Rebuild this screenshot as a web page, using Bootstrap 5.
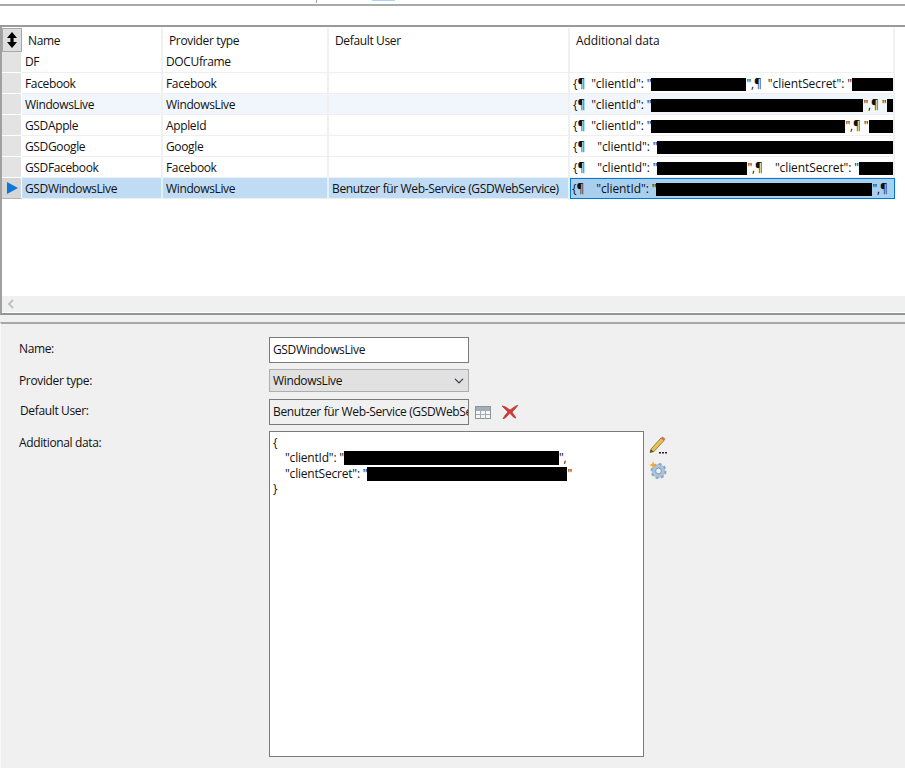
<!DOCTYPE html>
<html lang="en"><head><meta charset="utf-8"><title>Providers</title>
<link href="https://cdn.jsdelivr.net/npm/bootstrap@5.3.0/dist/css/bootstrap.min.css" rel="stylesheet">
<style>
html,body{height:768px;overflow:hidden}
body{background:#fff;color:#111;font:12px/15.3px "Open Sans","Noto Sans",sans-serif;letter-spacing:-.36px}
.tabstrip{height:4px;position:relative}
.tabline{width:1px;height:3px;background:#a0a0a0;margin-left:316px}
.tabmark{width:23px;height:1px;background:#a8d4f5;position:absolute;left:372px;top:0}
.toolstrip{border-top:2px solid #a9a9a9;border-bottom:2px solid #9a9a9a;box-sizing:content-box;height:19px}
.gridpane{height:288px;border-left:2px solid #a0a0a0;border-bottom:2px solid #8f959b;padding-top:1px}
.gridscroll{height:268px;overflow:hidden}
.grid-tbl{table-layout:fixed;width:893px;margin:0;border-collapse:separate;border-spacing:0;color:#111}
.grid-tbl>thead>tr>th,.grid-tbl>tbody>tr>td{font-weight:400;height:21px;padding:1px 0 0 3px;white-space:nowrap;overflow:hidden;border:0;border-bottom:1px solid #efefef;border-right:2px solid #f0f0f0;background:#fff;color:#111;vertical-align:middle;box-shadow:none}
.grid-tbl>tbody>tr:first-child>td{padding-top:0}
.grid-tbl>thead>tr>th{height:24px;border-bottom:0;padding:2px 0 0 6px}
.grid-tbl>thead>tr>th.selcol,.grid-tbl>tbody>tr>td.selcol{padding:0;background:#e3e3e3;border-right:1px solid #fff;border-bottom:1px solid #fff}
.grid-tbl>thead>tr>th.selcol{background:#dedede;border:1px solid #a8a8a8;text-align:center}
.grid-tbl>tbody>tr.altrow>td:not(.selcol){background:#f0f6fc}
.grid-tbl>tbody>tr.selrow>td:not(.selcol){background:#bfdcf4;border-right-color:#e4f0fa}
.grid-tbl>tbody>tr.selrow>td.selcol{background:#d6d6d6;border-bottom:1px solid #b5b5b5}
.grid-tbl>tbody>tr.selrow>td.curcell{background:#a8cfee;border:1px solid #0078d7;padding:0 0 0 1px}
.grid-tbl .datacol{letter-spacing:-.1px}
.blot{display:inline-block;background:#000;height:13px;vertical-align:-3px}
.hscroll{background:#f0f0f0;display:flex;align-items:center;padding-left:5px;border-bottom:1px solid #fff;box-sizing:content-box;height:16px}
.gutter{height:7px;background:#f0f0f0}
.detail{height:446px;background:#f0f0f0;border-top:2px solid #a8a8a8;border-left:1px solid #fafafa;padding:13px 0 0 18px}
.fieldrow{display:flex;align-items:flex-start}
.fieldlabel{width:250px;flex:none;margin:0;color:#111;padding-top:4px}
.shiftlabel{text-indent:1px}
.fieldbox.form-control,.fieldbox.form-select{width:200px;flex:none;border:1px solid #7a7a7a;border-radius:0;font:inherit;letter-spacing:inherit;color:#111;padding:0 3px;box-shadow:none}
.fieldbox.form-control{height:26px;line-height:23px;background:#fff;white-space:nowrap;overflow:hidden}
.fieldbox.form-select{height:23px;background-color:#e1e1e1;border-color:#adadad;background-position:right 3px center;background-size:12px 10px;padding-right:20px}
.fieldbox.roval.form-control{background:#f0f0f0}
.jsonbox.form-control{width:375px;height:326px;flex:none;border:1px solid #7a7a7a;border-radius:0;background:#fff;font:inherit;letter-spacing:-.2px;line-height:15.3px;color:#111;padding:3px 3px;box-shadow:none}
.jsonline{white-space:nowrap;height:15.3px}
.jsonindent{padding-left:12px}
.jsonbox .blot{height:14px;vertical-align:-3px}
.iconstack{display:flex;flex-direction:column;gap:6px;margin:4px 0 0 5px}
.inlineicons{display:flex;align-items:center;gap:10px;margin:3px 0 0 6px;height:20px}
svg{display:block}
</style></head><body>
<div class="tabstrip"><div class="tabline"></div><div class="tabmark"></div></div>
<div class="toolstrip"></div>
<div class="gridpane">
<div class="gridscroll">
<table class="table grid-tbl">
<colgroup><col style="width:20px"><col style="width:141px"><col style="width:166px"><col style="width:241px"><col style="width:325px"></colgroup>
<thead><tr>
<th class="selcol"><svg class="mx-auto" width="12" height="18" viewBox="0 0 12 18"><path d="M6 1 11 7H7.600v4H11L6 17 1 11h3.400V7H1z" fill="#000"/></svg></th>
<th>Name</th><th>Provider type</th><th>Default User</th><th class="datacol">Additional data</th></tr></thead>
<tbody>
<tr><td class="selcol"></td><td>DF</td><td>DOCUframe</td><td></td><td></td></tr>
<tr><td class="selcol"></td><td>Facebook</td><td>Facebook</td><td></td><td class="datacol">{¶ &nbsp;"clientId": "<span class="blot" style="width:95px"></span>",¶ &nbsp;"clientSecret": "<span class="blot" style="width:45px"></span></td></tr>
<tr class="altrow"><td class="selcol"></td><td>WindowsLive</td><td>WindowsLive</td><td></td><td class="datacol">{¶ &nbsp;"clientId": "<span class="blot" style="width:212px"></span>",¶ "<span class="blot" style="width:10px"></span></td></tr>
<tr><td class="selcol"></td><td>GSDApple</td><td>AppleId</td><td></td><td class="datacol">{¶ &nbsp;"clientId": "<span class="blot" style="width:194px"></span>",¶ "<span class="blot" style="width:28px"></span></td></tr>
<tr><td class="selcol"></td><td>GSDGoogle</td><td>Google</td><td></td><td class="datacol">{¶ &nbsp; &nbsp;"clientId": "<span class="blot" style="width:238px"></span></td></tr>
<tr><td class="selcol"></td><td>GSDFacebook</td><td>Facebook</td><td></td><td class="datacol">{¶ &nbsp; &nbsp;"clientId": "<span class="blot" style="width:90px"></span>",¶ &nbsp; &nbsp;"clientSecret": "<span class="blot" style="width:40px"></span></td></tr>
<tr class="selrow"><td class="selcol"><svg class="ms-1" width="12" height="12" viewBox="0 0 12 12"><path d="M1 0 12 6 1 12z" fill="#0a78d8"/></svg></td><td>GSDWindowsLive</td><td>WindowsLive</td><td>Benutzer für Web-Service (GSDWebService)</td><td class="curcell datacol">{¶ &nbsp; &nbsp;"clientId": "<span class="blot" style="width:216px"></span>",¶</td></tr>
</tbody></table>
</div>
<div class="hscroll"><svg width="8" height="10" viewBox="0 0 8 10"><path d="M6 1 2 5l4 4" fill="none" stroke="#c2c2c2" stroke-width="2"/></svg></div>
</div>
<div class="gutter"></div>
<div class="detail">
<div class="fieldrow" style="margin-bottom:6px"><label class="fieldlabel form-label">Name:</label><div class="fieldbox form-control">GSDWindowsLive</div></div>
<div class="fieldrow" style="margin-bottom:7px"><label class="fieldlabel form-label">Provider type:</label><select class="fieldbox form-select"><option>WindowsLive</option></select></div>
<div class="fieldrow" style="margin-bottom:6px"><label class="fieldlabel form-label shiftlabel">Default User:</label><div class="fieldbox roval form-control">Benutzer für Web-Service (GSDWebService)</div>
<div class="inlineicons">
<svg width="16" height="13" viewBox="0 0 16 13"><rect x=".5" y=".5" width="15" height="12" fill="#f4f6f8" stroke="#8c949c"/><path d="M1 1h14v3H1z" fill="#a4adb6"/><path d="M1 4.500h14M1 8.500h14M5.500 4v8.500M10.500 4v8.500" stroke="#a3acb5"/></svg>
<svg width="18" height="14" viewBox="0 0 18 14"><path d="M1 1c3 0 5 2 8 4 3-2 5-4 8-5-2 3-4 5-6 7 1 2 3 4 4 6-2 0-4-2-6-5-2 2-4 5-7 6 1-3 3-5 5-7C5 5 3 3 1 1z" fill="#d63a32" stroke="#a92a25" stroke-width=".6"/></svg>
</div></div>
<div class="fieldrow"><label class="fieldlabel form-label">Additional data:</label>
<div class="jsonbox form-control">
<div class="jsonline">{</div>
<div class="jsonline jsonindent">"clientId": "<span class="blot" style="width:215px"></span>",</div>
<div class="jsonline jsonindent">"clientSecret": "<span class="blot" style="width:200px"></span>"</div>
<div class="jsonline">}</div>
</div>
<div class="iconstack">
<svg width="18" height="19" viewBox="0 0 18 19"><path d="M2 14 12 3l3 2.500L5 16.500l-4 1z" fill="#e8bf55" stroke="#8a6b28" stroke-width=".8"/><path d="M12 3l1.500-1.500 3 2.500L15 5.500z" fill="#c9736a"/><path d="M1 17.500l1-3 2.500 2z" fill="#444"/><path d="M10 17h2v1.500h-2zM13 17h2v1.500h-2zM16 17h2v1.500h-2z" fill="#222"/></svg>
<svg width="18" height="19" viewBox="0 0 18 19"><circle cx="9.500" cy="11" r="5" fill="none" stroke="#a9c4dc" stroke-width="3.800"/><circle cx="9.500" cy="11" r="7" fill="none" stroke="#86a6c4" stroke-width="2" stroke-dasharray="2.800 2.700"/><circle cx="9.500" cy="11" r="2.900" fill="none" stroke="#5f82a3" stroke-width=".8"/><path d="M4 1l1 3 3 1-3 1-1 3-1-3-3-1 3-1z" fill="#f4a92a"/></svg>
</div></div>
</div>
</body></html>
